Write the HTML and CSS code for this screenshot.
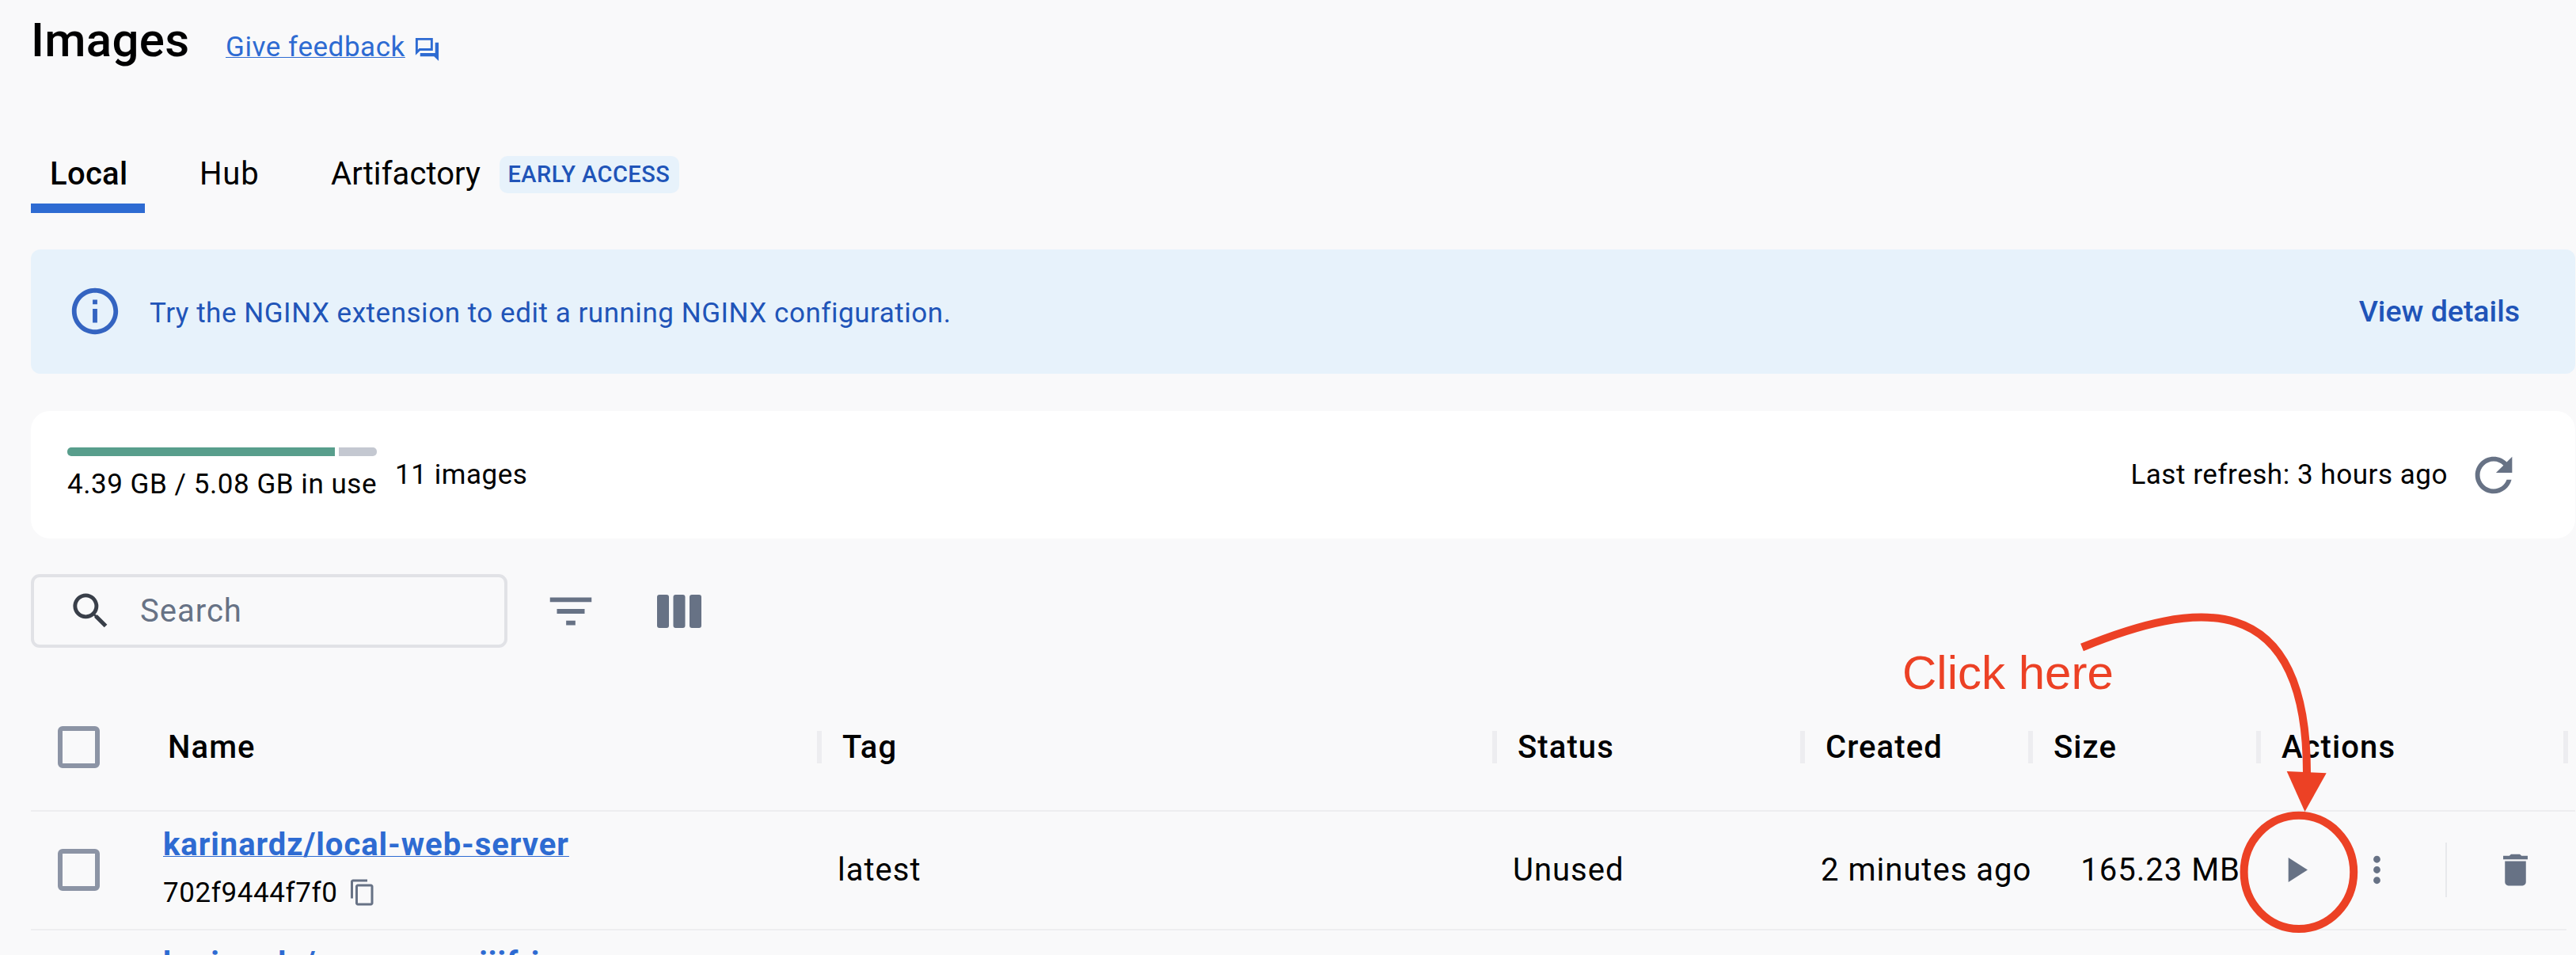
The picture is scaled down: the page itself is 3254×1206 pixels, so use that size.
FILE: index.html
```
<!DOCTYPE html>
<html lang="en">
<head>
<meta charset="utf-8">
<title>Images</title>
<link rel="stylesheet" href="styles.css">
</head>
<body>
<main class="page">
  <header class="header">
    <h1 class="title">Images</h1>
    <a class="feedback">Give feedback</a>
    <svg class="feedback-icon" viewBox="0 0 24 24"><path d="M15 4v7H5.17L4 12.17V4h11m2-2H2v15l4-4h11V2m5 4h-3v9H6v3h12l4 4V6"/></svg>
  </header>

  <nav class="tabs">
    <div class="tab tab-active">Local</div>
    <div class="tab tab-hub">Hub</div>
    <div class="tab tab-artifactory">Artifactory</div>
    <span class="badge">EARLY ACCESS</span>
  </nav>

  <section class="banner">
    <svg class="icon-lg info" viewBox="0 0 24 24"><path d="M11 7h2v2h-2zm0 4h2v6h-2zm1-9C6.48 2 2 6.48 2 12s4.48 10 10 10 10-4.480 10-10S17.520 2 12 2m0 18c-4.410 0-8-3.590-8-8s3.590-8 8-8 8 3.590 8 8-3.590 8-8 8"/></svg>
    <span class="banner-text">Try the NGINX extension to edit a running NGINX configuration.</span>
    <a class="banner-link">View details</a>
  </section>

  <section class="card">
    <div class="usage">
      <div class="meter"><i class="meter-used"></i><i class="meter-free"></i></div>
      <div class="usage-text">4.39 GB / 5.08 GB in use</div>
    </div>
    <span class="count">11 images</span>
    <span class="refresh-text">Last refresh: 3 hours ago</span>
    <svg class="icon-lg" viewBox="0 0 24 24"><path d="M17.650 6.350C16.200 4.900 14.210 4 12 4c-4.420 0-7.990 3.580-7.990 8s3.570 8 7.990 8c3.730 0 6.840-2.550 7.730-6h-2.080c-.82 2.330-3.040 4-5.650 4-3.310 0-6-2.690-6-6s2.690-6 6-6c1.660 0 3.140.69 4.220 1.780L13 11h7V4z"/></svg>
  </section>

  <div class="toolbar">
    <div class="search">
      <svg class="search-icon" viewBox="0 0 24 24"><path d="M15.500 14h-.79l-.28-.27C15.410 12.590 16 11.110 16 9.500 16 5.910 13.090 3 9.500 3S3 5.910 3 9.500 5.910 16 9.500 16c1.610 0 3.090-.59 4.230-1.570l.27.28v.79l5 4.990L20.490 19zm-6 0C7.010 14 5 11.990 5 9.500S7.010 5 9.500 5 14 7.010 14 9.500 11.990 14 9.500 14"/></svg>
      <span>Search</span>
    </div>
    <svg class="icon-lg filter" viewBox="0 0 24 24"><path d="M10 18h4v-2h-4zM3 6v2h18V6zm3 7h12v-2H6z"/></svg>
    <svg class="columns-icon" viewBox="0 0 56 42"><rect width="15" height="42" rx="3"/><rect x="20.500" width="15" height="42" rx="3"/><rect x="41" width="15" height="42" rx="3"/></svg>
  </div>

  <section class="table">
    <div class="row head">
      <div class="cell-check"><i class="checkbox"></i></div>
      <div class="cell">Name</div>
      <div class="cell">Tag</div>
      <div class="cell">Status</div>
      <div class="cell">Created</div>
      <div class="cell">Size</div>
      <div class="cell">Actions</div>
    </div>
    <div class="row body">
      <div class="cell-check"><i class="checkbox"></i></div>
      <div class="cell name">
        <a class="link">karinardz/local-web-server</a>
        <div class="hash">702f9444f7f0
          <svg class="copy" viewBox="0 0 24 24"><path d="M16 1H4c-1.100 0-2 .9-2 2v14h2V3h12zm3 4H8c-1.100 0-2 .9-2 2v14c0 1.100.9 2 2 2h11c1.100 0 2-.9 2-2V7c0-1.100-.9-2-2-2m0 16H8V7h11z"/></svg>
        </div>
      </div>
      <div class="cell">latest</div>
      <div class="cell">Unused</div>
      <div class="cell">2 minutes ago</div>
      <div class="cell size">165.23 MB</div>
      <div class="cell actions">
        <svg class="icon-sm play" viewBox="0 0 24 24"><path d="M8 5v14l11-7z"/></svg>
        <svg class="icon-sm more" viewBox="0 0 24 24"><path d="M12 8c1.100 0 2-.9 2-2s-.9-2-2-2-2 .9-2 2 .9 2 2 2m0 2c-1.100 0-2 .9-2 2s.9 2 2 2 2-.9 2-2-.9-2-2-2m0 6c-1.100 0-2 .9-2 2s.9 2 2 2 2-.9 2-2-.9-2-2-2"/></svg>
        <i class="divider"></i>
        <svg class="icon-sm" viewBox="0 0 24 24"><path d="M6 19c0 1.100.9 2 2 2h8c1.100 0 2-.9 2-2V7H6zM19 4h-3.500l-1-1h-5l-1 1H5v2h14z"/></svg>
      </div>
    </div>
    <div class="row body">
      <div class="cell-check"><i class="checkbox"></i></div>
      <div class="cell name">
        <a class="link">karinardz/<span class="link-mid">nuxemarea</span>iiifri</a>
      </div>
    </div>
  </section>
</main>

<div class="note">Click here</div>
<svg class="annotation" viewBox="2600 760 400 430">
  <path class="stroke" d="M2630 817.500C2770 760.500 2914 737 2914 976"/>
  <path class="tip" d="M2888.700 974L2938.700 976.300 2911.500 1025z"/>
  <ellipse class="stroke" cx="2903.900" cy="1101.300" rx="69.300" ry="71.600"/>
</svg>
</body>
</html>
```
FILE: styles.css
```
* { box-sizing: border-box; }

body {
  margin: 0;
  height: 1206px;
  overflow: hidden;
  background: #f9f9fa;
  color: #000;
  font-family: Roboto, "Liberation Sans", sans-serif;
  font-size: 40px;
  letter-spacing: 1px;
  position: relative;
}

svg { display: block; flex: none; fill: #677285; }

.page { padding: 10px 1px 0 39px; height: 1206px; overflow: hidden; }

.header { display: flex; height: 81px; align-items: baseline; }
.title { margin: 0; width: 246px; font-size: 60px; line-height: 81px; font-weight: 500; letter-spacing: 0.3px; }
.feedback {
  width: 237px;
  font-size: 35px;
  letter-spacing: 0.55px;
  color: #2e6bd2;
  text-decoration: underline 1px;
  text-underline-offset: 1px;
}
.feedback-icon { width: 35px; height: 35px; fill: #2e6bd2; align-self: flex-start; margin-top: 35px; }

.tabs { display: flex; height: 90px; margin-top: 88px; }
.tab { padding-top: 3px; line-height: 75px; letter-spacing: 0.8px; }
.tab-active { width: 144px; padding-left: 24px; font-weight: 500; letter-spacing: 0.3px; border-bottom: 12px solid #2e6bd2; }
.tab-hub { width: 166px; margin-left: 69px; }
.tab-artifactory { width: 213px; letter-spacing: 0.05px; }
.badge {
  width: 227px;
  height: 47px;
  margin-top: 18px;
  padding-left: 10.5px;
  border-radius: 10px;
  background: #e7f2fb;
  color: #2054b8;
  font-size: 29px;
  line-height: 47px;
  font-weight: 500;
  letter-spacing: 0.45px;
}

.banner {
  display: flex;
  align-items: center;
  height: 157px;
  margin-top: 46px;
  padding: 0 70px 0 46px;
  border-radius: 12px;
  background: #e7f2fb;
  color: #2054b8;
}
.icon-lg { width: 70px; height: 70px; }
.info { fill: #3464c1; margin-top: -2px; }
.banner-text { margin-left: 34px; padding-top: 4px; font-size: 35px; letter-spacing: 0.53px; }
.banner-link { margin-left: auto; padding-bottom: 2px; font-size: 37.5px; font-weight: 500; letter-spacing: 0; }

.card {
  display: flex;
  align-items: center;
  height: 161px;
  margin-top: 47px;
  padding: 0 68px 0 46px;
  border-radius: 24px;
  background: #fff;
  font-size: 35px;
  letter-spacing: 0.54px;
}
.usage { width: 391px; }
.meter { display: flex; gap: 5px; height: 11px; }
.meter-used { flex: 337; background: #589e8c; border-radius: 5px 0 0 5px; }
.meter-free { flex: 48; background: #c4c8d1; border-radius: 0 5px 5px 0; }
.usage-text { margin-top: 13px; line-height: 45px; white-space: nowrap; }
.count { margin-left: 23px; }
.refresh-text { margin-left: auto; margin-right: 23px; }

.toolbar { display: flex; align-items: center; height: 93px; margin-top: 45px; }
.search {
  display: flex;
  align-items: center;
  width: 602px;
  height: 93px;
  padding-left: 42px;
  border: 4px solid #e1e2e6;
  border-radius: 11px;
  color: #677285;
}
.search-icon { width: 59px; height: 59px; margin-right: 33px; fill: #393f49; }
.filter { margin-left: 45px; }
.columns-icon { width: 56px; height: 42px; margin-left: 74px; }

.table { margin-top: 46px; }
.row {
  display: grid;
  grid-template-columns: 147px 852px 853px 389px 288px 288px 388px;
  width: 3214px;
  height: 161px;
  border-bottom: 2px solid #eeeef0;
}
.cell { display: flex; align-items: center; padding-left: 26px; white-space: nowrap; }
.cell-check { display: flex; align-items: center; padding-left: 34px; }
.checkbox { width: 53px; height: 53px; border: 6px solid #8c94a5; border-radius: 6px; }
.head { font-weight: 500; letter-spacing: 1.1px; }
.head .cell::after { content: ""; width: 6px; height: 41px; margin-left: auto; background: #ededf0; }

.body { width: 3203px; height: 150px; }
.body .cell { padding-left: 20px; padding-bottom: 1px; }
.body .cell-check { padding-bottom: 2px; }
.body .name { display: block; padding-top: 11px; }
.link {
  display: block;
  width: max-content;
  line-height: 61px;
  font-weight: 700;
  letter-spacing: 0.95px;
  color: #2e6bd2;
  text-decoration: underline 1px;
  text-underline-offset: 1px;
}
.link-mid { display: inline-block; width: 206px; overflow: hidden; vertical-align: top; }
.hash { display: flex; align-items: center; gap: 13px; height: 60px; font-size: 35px; letter-spacing: 0.58px; }
.copy { width: 36px; height: 36px; }
.body .size { justify-content: flex-end; padding-right: 26px; }
.body .actions { padding-left: 17px; }
.icon-sm { width: 53px; height: 53px; }
.more { margin-left: 50px; }
.divider { width: 2px; height: 69px; margin: 0 60px; background: #e8e9ec; }

/* Callout drawn over the table */
.note {
  position: absolute;
  left: 2403px;
  top: 816px;
  font: 60px/68px "Liberation Sans", Arial, sans-serif;
  letter-spacing: 0;
  color: #ec4125;
}
.annotation { position: absolute; left: 2600px; top: 760px; width: 400px; height: 430px; }
.stroke { fill: none; stroke: #ec4125; stroke-width: 10px; }
.tip { fill: #ec4125; }
```
